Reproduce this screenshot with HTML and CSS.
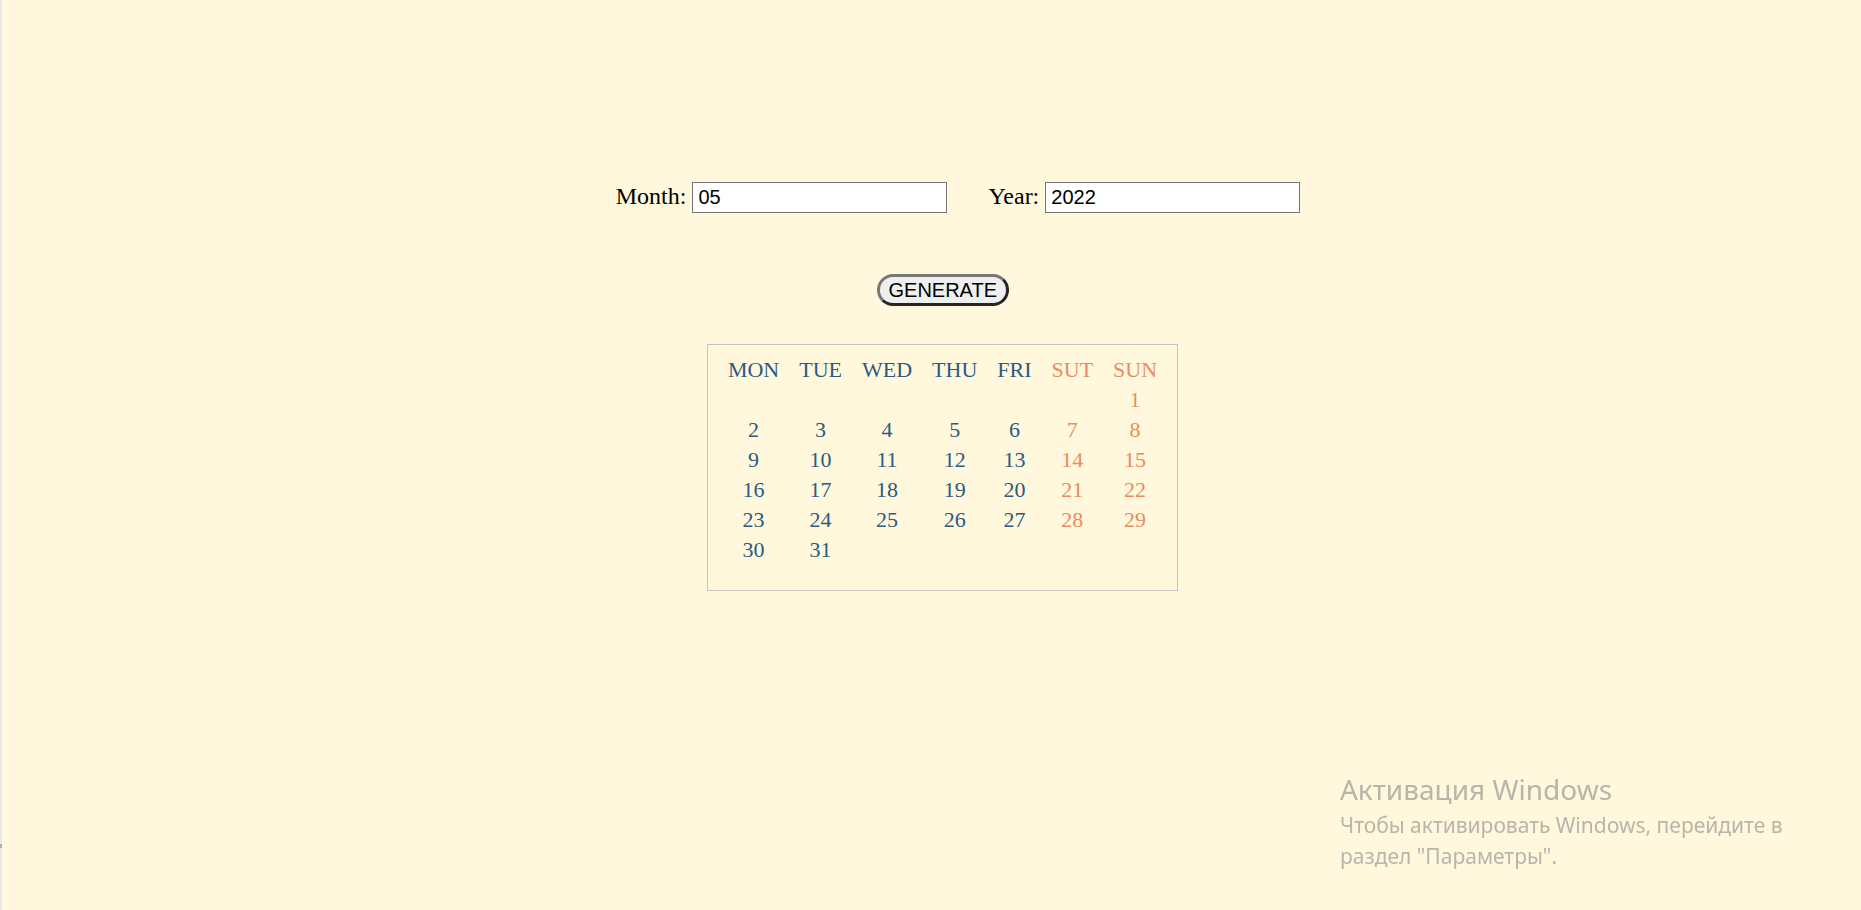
FILE: index.html
```html
<!DOCTYPE html>
<html lang="en">
<head>
<meta charset="utf-8">
<title>Calendar</title>
<link rel="stylesheet" href="styles.css">
</head>
<body>
<div class="edge"><span class="edge-mark"></span></div>
<main class="page">
  <form class="controls">
    <label class="field">Month: <input class="field-input" type="text" value="05"></label>
    <label class="field">Year: <input class="field-input" type="text" value="2022"></label>
  </form>
  <button class="generate" type="button">GENERATE</button>
  <div class="calendar">
    <table class="cal-table">
      <thead>
        <tr><th>MON</th><th>TUE</th><th>WED</th><th>THU</th><th>FRI</th><th class="we">SUT</th><th class="we">SUN</th></tr>
      </thead>
      <tbody>
        <tr><td></td><td></td><td></td><td></td><td></td><td class="we"></td><td class="we">1</td></tr>
        <tr><td>2</td><td>3</td><td>4</td><td>5</td><td>6</td><td class="we">7</td><td class="we">8</td></tr>
        <tr><td>9</td><td>10</td><td>11</td><td>12</td><td>13</td><td class="we">14</td><td class="we">15</td></tr>
        <tr><td>16</td><td>17</td><td>18</td><td>19</td><td>20</td><td class="we">21</td><td class="we">22</td></tr>
        <tr><td>23</td><td>24</td><td>25</td><td>26</td><td>27</td><td class="we">28</td><td class="we">29</td></tr>
        <tr><td>30</td><td>31</td><td></td><td></td><td></td><td class="we"></td><td class="we"></td></tr>
      </tbody>
    </table>
  </div>
</main>
<div class="watermark">
  <div class="wm-title">Активация Windows</div>
  <div class="wm-text">Чтобы активировать Windows, перейдите в<br>раздел "Параметры".</div>
</div>
</body>
</html>
```
FILE: styles.css
```css
html, body {
  margin: 0;
  padding: 0;
}

body {
  background: #fff8dc;
  font-family: "Liberation Serif", "Times New Roman", serif;
  color: #000;
  min-height: 100vh;
}

.edge {
  position: fixed;
  left: 0;
  top: 0;
  bottom: 0;
  width: 2px;
  background: #e6eaec;
}

.edge-mark {
  position: absolute;
  left: 0;
  top: 844px;
  width: 2px;
  height: 4px;
  background: #a9adb0;
}

.page {
  display: flex;
  flex-direction: column;
  align-items: center;
  padding-top: 182px;
  padding-left: 24px;
}

.controls {
  display: flex;
  gap: 41px;
  padding-left: 31px;
  margin: 0;
}

.field {
  font-size: 24px;
  white-space: nowrap;
}

.field-input {
  box-sizing: border-box;
  width: 255px;
  height: 31px;
  padding: 3px 5px;
  border: 1px solid #767676;
  border-radius: 0;
  background: #fff;
  font-family: "Liberation Sans", Arial, sans-serif;
  font-size: 20px;
  color: #000;
  outline: none;
}

.generate {
  box-sizing: border-box;
  margin-top: 61px;
  height: 32px;
  width: 132px;
  padding: 0 9px;
  border: 3px solid;
  border-color: #777 #262626 #262626 #777;
  border-radius: 16px;
  background: #efefef;
  font-family: "Liberation Sans", Arial, sans-serif;
  font-size: 20px;
  line-height: 26px;
  color: #000;
}

.calendar {
  margin-top: 38px;
  border: 1px solid #c4c4c4;
  padding: 8px 8.5px 24px;
}

.cal-table {
  border-collapse: separate;
  border-spacing: 3px;
  font-size: 22px;
  line-height: 25px;
  color: #2b5a84;
}

.cal-table th,
.cal-table td {
  padding: 1px 8.5px;
  text-align: center;
  font-weight: normal;
}

.cal-table .we {
  color: #ec8b62;
}

.watermark {
  position: fixed;
  left: 1340px;
  top: 772px;
  font-family: "Noto Sans", "Open Sans", sans-serif;
  color: #b8b5ab;
  white-space: nowrap;
}

.wm-title {
  font-size: 28px;
  line-height: 34px;
}

.wm-text {
  padding-top: 4px;
  font-size: 21px;
  line-height: 31px;
}
```
